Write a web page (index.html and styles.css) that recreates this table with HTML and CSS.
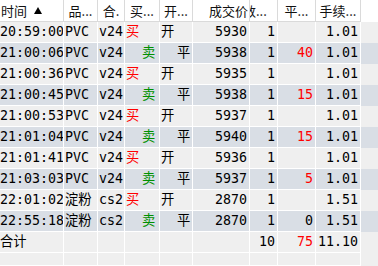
FILE: index.html
```html
<!DOCTYPE html>
<html>
<head>
<meta charset="utf-8">
<link rel="stylesheet" href="styles.css">
</head>
<body>
<div class="grid">
  <div class="row head">
    <div class="c c1 hl">时间 <svg class="arrow" width="8" height="7" viewBox="0 0 8 7"><polygon points="4,0 8,7 0,7" fill="#000"/></svg></div>
    <div class="c hc">品...</div>
    <div class="c hc">合.</div>
    <div class="c hc">买...</div>
    <div class="c hc">开...</div>
    <div class="c hr">成交价</div>
    <div class="c hclip"><span class="clip">数...</span></div>
    <div class="c hc">平...</div>
    <div class="c hc">手续...</div>
  </div>

  <div class="row">
    <div class="c c1">20:59:00</div><div class="c">PVC</div><div class="c">v24</div><div class="c buy">买</div><div class="c">开</div><div class="c r">5930</div><div class="c r">1</div><div class="c r red"></div><div class="c r">1.01</div>
  </div>
  <div class="row alt">
    <div class="c c1">21:00:06</div><div class="c">PVC</div><div class="c">v24</div><div class="c sell">  卖</div><div class="c">  平</div><div class="c r">5938</div><div class="c r">1</div><div class="c r red">40</div><div class="c r">1.01</div>
  </div>
  <div class="row">
    <div class="c c1">21:00:36</div><div class="c">PVC</div><div class="c">v24</div><div class="c buy">买</div><div class="c">开</div><div class="c r">5935</div><div class="c r">1</div><div class="c r red"></div><div class="c r">1.01</div>
  </div>
  <div class="row alt">
    <div class="c c1">21:00:45</div><div class="c">PVC</div><div class="c">v24</div><div class="c sell">  卖</div><div class="c">  平</div><div class="c r">5938</div><div class="c r">1</div><div class="c r red">15</div><div class="c r">1.01</div>
  </div>
  <div class="row">
    <div class="c c1">21:00:53</div><div class="c">PVC</div><div class="c">v24</div><div class="c buy">买</div><div class="c">开</div><div class="c r">5937</div><div class="c r">1</div><div class="c r red"></div><div class="c r">1.01</div>
  </div>
  <div class="row alt">
    <div class="c c1">21:01:04</div><div class="c">PVC</div><div class="c">v24</div><div class="c sell">  卖</div><div class="c">  平</div><div class="c r">5940</div><div class="c r">1</div><div class="c r red">15</div><div class="c r">1.01</div>
  </div>
  <div class="row">
    <div class="c c1">21:01:41</div><div class="c">PVC</div><div class="c">v24</div><div class="c buy">买</div><div class="c">开</div><div class="c r">5936</div><div class="c r">1</div><div class="c r red"></div><div class="c r">1.01</div>
  </div>
  <div class="row alt">
    <div class="c c1">21:03:03</div><div class="c">PVC</div><div class="c">v24</div><div class="c sell">  卖</div><div class="c">  平</div><div class="c r">5937</div><div class="c r">1</div><div class="c r red">5</div><div class="c r">1.01</div>
  </div>
  <div class="row">
    <div class="c c1">22:01:02</div><div class="c">淀粉</div><div class="c">cs2</div><div class="c buy">买</div><div class="c">开</div><div class="c r">2870</div><div class="c r">1</div><div class="c r red"></div><div class="c r">1.51</div>
  </div>
  <div class="row alt">
    <div class="c c1">22:55:18</div><div class="c">淀粉</div><div class="c">cs2</div><div class="c sell">  卖</div><div class="c">  平</div><div class="c r">2870</div><div class="c r">1</div><div class="c r">0</div><div class="c r">1.51</div>
  </div>
  <div class="row">
    <div class="c c1">合计</div><div class="c"></div><div class="c"></div><div class="c"></div><div class="c"></div><div class="c"></div><div class="c r">10</div><div class="c r red">75</div><div class="c r">11.10</div>
  </div>
  <div class="row filler">
    <div class="c c1"></div><div class="c"></div><div class="c"></div><div class="c"></div><div class="c"></div><div class="c"></div><div class="c"></div><div class="c"></div><div class="c"></div>
  </div>
</div>
</body>
</html>
```

FILE: styles.css
```css
html, body {
  margin: 0;
  padding: 0;
}
body {
  width: 378px;
  height: 266px;
  overflow: hidden;
  background: #f0f0f0;
  font-family: "DejaVu Sans Mono", "Noto Sans CJK SC", monospace;
  color: #000;
}
.grid {
  display: flex;
  flex-direction: column;
}
.row {
  display: grid;
  grid-template-columns: 64px 34px 27px 35px 33px 57px 28px 38px 45px;
  height: 21px;
  background: #efefef;
}
.row.alt {
  background: #d9dee5;
}
.c {
  box-sizing: border-box;
  border-right: 1px solid #ffffff;
  border-bottom: 1px solid #ffffff;
  white-space: pre;
  overflow: hidden;
  font-size: 13.3px;
  line-height: 20px;
  padding: 0 2px 0 1px;
}
.c1 {
  padding: 0;
}
.r {
  text-align: right;
}
.red {
  color: #ff0000;
}
.buy {
  color: #ff0000;
}
.sell {
  color: #009000;
}
.head {
  height: 22px;
  background: #ffffff;
}
.head .c {
  font-family: "Noto Sans CJK SC", sans-serif;
  font-size: 13px;
  line-height: 21px;
  border-right: 1px solid #dadada;
  border-bottom: 1px solid #dadada;
  color: #111;
}
.head .hl {
  padding-left: 1px;
  display: flex;
  align-items: center;
  gap: 4px;
}
.head .hc {
  text-align: center;
  padding: 0;
}
.head .hr {
  text-align: right;
  padding-right: 1px;
}
.head .hclip {
  text-align: left;
  padding: 0;
}
.arrow {
  display: block;
  margin-top: -1px;
}
.clip {
  display: inline-block;
  margin-left: -7px;
}
.filler {
  height: 13px;
}
```
